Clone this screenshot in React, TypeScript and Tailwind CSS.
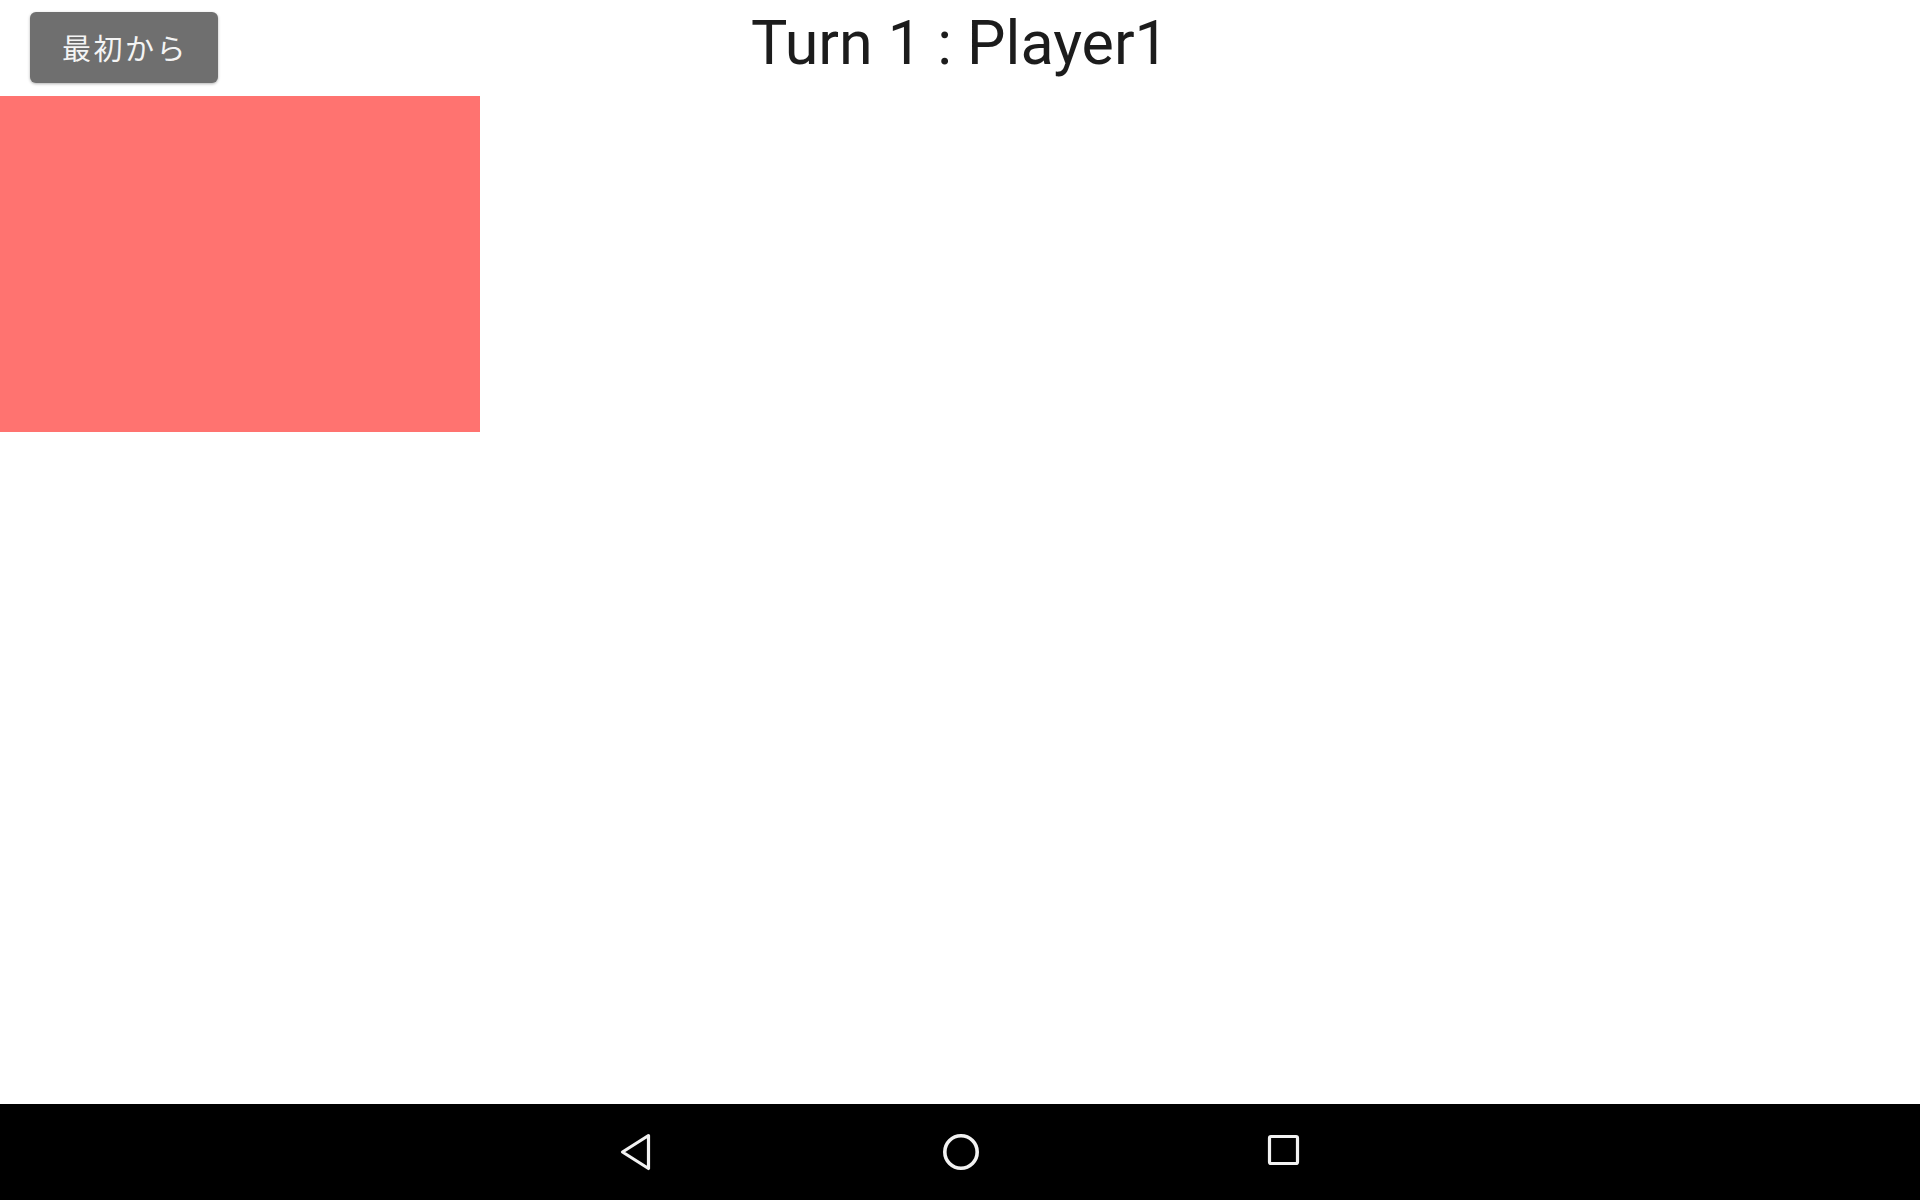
import React from "react";

const NavBack = () => (
    <svg width="40" height="40" viewBox="0 0 40 40" fill="none">
        <path d="M32.5 3.5 L6.5 20 L32.5 36.5 Z" stroke="#f2f2f2" strokeWidth="3.2" strokeLinejoin="round" />
    </svg>
);

const NavHome = () => (
    <svg width="40" height="40" viewBox="0 0 40 40" fill="none">
        <circle cx="21" cy="20" r="16.2" stroke="#f2f2f2" strokeWidth="3.6" />
    </svg>
);

const NavRecent = () => (
    <svg width="40" height="40" viewBox="0 0 40 40" fill="none">
        <rect x="5.5" y="4.5" width="28" height="27" rx="1.5" stroke="#f2f2f2" strokeWidth="3.2" />
    </svg>
);

export default function App() {
    return (
        <div className="flex flex-col h-screen w-full bg-white font-['Roboto','Noto_Sans_CJK_JP',sans-serif]">
            {/* header */}
            <div className="grid grid-cols-[1fr_auto_1fr] h-[96px] shrink-0">
                <div className="pt-[12px] pl-[30px]">
                    <button className="h-[71px] w-[188px] rounded-[6px] bg-[#6f6f6f] text-[#f4f4f4] text-[29px] tracking-[2.5px] font-['Noto_Sans_CJK_JP',sans-serif] shadow-[0_1px_3px_rgba(0,0,0,0.3)] flex items-center justify-center pl-[2px]">
                        最初から
                    </button>
                </div>
                <h1 className="pt-[13px] text-[61px] leading-[60px] text-[#1c1c1c] font-['Roboto',sans-serif]">
                    Turn 1 : Player1
                </h1>
                <div />
            </div>

            {/* board */}
            <div className="flex-1">
                <div className="w-[480px] h-[336px] bg-[#ff7370]" />
            </div>

            {/* android nav bar */}
            <div className="h-[96px] shrink-0 bg-black flex items-center justify-center gap-[264px]">
                <div className="w-[60px] flex justify-center"><NavBack /></div>
                <div className="w-[60px] flex justify-center"><NavHome /></div>
                <div className="w-[60px] flex justify-center"><NavRecent /></div>
            </div>
        </div>
    );
}
